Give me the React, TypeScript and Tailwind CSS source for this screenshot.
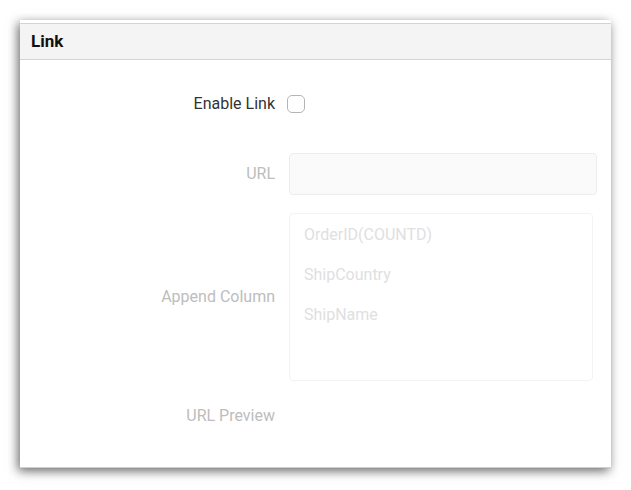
import React from 'react';

const columns = ['OrderID(COUNTD)', 'ShipCountry', 'ShipName'];

export default function App() {
  return (
    <div className="w-[631px] h-[490px] bg-white pt-[20px] pl-[20px] font-['Roboto','Liberation_Sans',sans-serif]">
      <div className="w-[591px] h-[448px] bg-white pt-[3px] border-b border-[#cfcfcf] shadow-[-2px_3px_10px_rgba(0,0,0,0.6)] flex flex-col">
        {/* Header */}
        <div className="h-[37px] shrink-0 bg-[#f4f4f4] border-y border-[#d4d4d4] flex items-center pl-[11px]">
          <span className="text-[17px] font-bold text-[#111] leading-none">Link</span>
        </div>

        {/* Body */}
        <div className="flex-1 pr-[14px] pt-[24px] grid grid-cols-[255px_1fr] content-start gap-x-[12px] text-[16px]">
          <div className="h-[40px] flex items-center justify-end text-[#333]">Enable Link</div>
          <div className="h-[40px] flex items-center">
            <span className="w-[18px] h-[18px] rounded-[5px] border border-[#b5b5b5] bg-white" />
          </div>

          <div className="mt-[29px] h-[42px] flex items-center justify-end text-[#bdbdbd]">URL</div>
          <div className="mt-[29px] pl-[2px]">
            <div className="h-[42px] rounded-[4px] border border-[#ececec] bg-[#fafafa]" />
          </div>

          <div className="mt-[18px] h-[168px] flex items-center justify-end text-[#bdbdbd]">Append Column</div>
          <div className="mt-[18px] pl-[2px] pr-[4px]">
            <div className="h-[168px] rounded-[4px] border border-[#f3f3f3] bg-white pt-[1px] pl-[14px] flex flex-col">
              {columns.map((c) => (
                <div key={c} className="h-[40px] flex items-center text-[#e0e0e0]">
                  {c}
                </div>
              ))}
            </div>
          </div>

          <div className="mt-[15px] h-[40px] flex items-center justify-end text-[#bdbdbd]">URL Preview</div>
          <div className="mt-[15px] h-[40px]" />
        </div>
      </div>
    </div>
  );
}
